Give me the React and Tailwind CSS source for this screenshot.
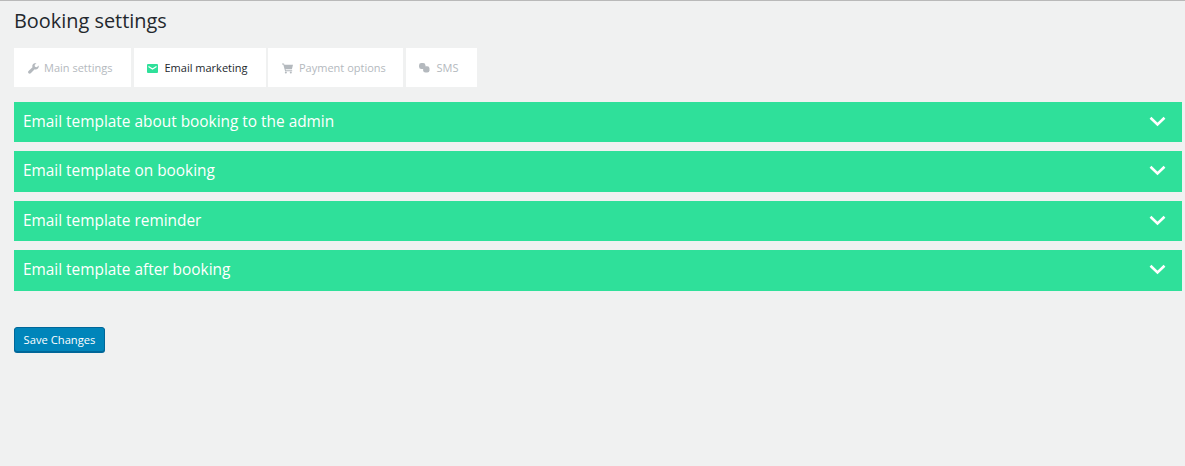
import React from 'react';

const tabs = [
  { name: 'Main settings', width: 'w-[117px]', gap: 'gap-[5px]', icon: 'wrench' },
  { name: 'Email marketing', width: 'w-[132px]', gap: 'gap-[6px]', icon: 'mail', active: true },
  { name: 'Payment options', width: 'w-[135px]', gap: 'gap-[6px]', icon: 'cart' },
  { name: 'SMS', width: 'w-[71px]', gap: 'gap-[6px]', icon: 'chat' },
];

const templates = [
  { title: 'Email template about booking to the admin', height: 'h-[40px] pb-[1px]' },
  { title: 'Email template on booking', height: 'h-[41px] pb-[2px]' },
  { title: 'Email template reminder', height: 'h-[40px] pb-[1px]' },
  { title: 'Email template after booking', height: 'h-[41px] pb-[2px]' },
];

const TabIcon = ({ icon }) => {
  if (icon === 'wrench') {
    return (
      <svg width="11" height="11" viewBox="0 0 12 12" className="text-[#b4b9be]">
        <path fill="currentColor" d="M11.6 2.6 9.6 4.6 7.6 4.2 7.2 2.3 9.3.4C7.8-.2 6 .3 5.2 1.5c-.6.9-.7 2-.3 3L.6 8.8c-.7.7-.7 1.7 0 2.4.7.7 1.7.7 2.4 0l4.3-4.3c1.1.4 2.3.2 3.2-.5 1.1-.9 1.5-2.4 1.1-3.8z" />
      </svg>
    );
  }
  if (icon === 'mail') {
    return (
      <svg width="11" height="9" viewBox="0 0 11 9">
        <rect width="11" height="9" rx="1" fill="#2fe09a" />
        <path d="M1.5 2.5 5.5 5 9.5 2.5" fill="none" stroke="#fff" strokeWidth="1.2" />
      </svg>
    );
  }
  if (icon === 'cart') {
    return (
      <svg width="11" height="11" viewBox="0 0 12 11" className="text-[#b4b9be]">
        <path fill="currentColor" d="M0 0h2.2l.4 1.5H12l-1.2 4.7H3.9l.3 1.2h6.9v1H3.4L1.4 1H0z" />
        <circle cx="4.2" cy="9.8" r="1.1" fill="currentColor" />
        <circle cx="9.6" cy="9.8" r="1.1" fill="currentColor" />
      </svg>
    );
  }
  return (
    <svg width="11" height="10" viewBox="0 0 12 11" className="text-[#b4b9be]">
      <rect x="0" y="0" width="7" height="6.5" rx="2.5" fill="currentColor" />
      <rect x="4.5" y="3.5" width="7" height="7" rx="2.5" fill="currentColor" />
    </svg>
  );
};

const App = () => {
  return (
    <div className="h-[466px] bg-[#f0f1f1] border-t border-[#b9b9b9] pl-[14px] pr-[3px] font-['Open_Sans','Noto_Sans',sans-serif] overflow-hidden">
      <h1 className="pt-[5px] h-[47px] text-[19.9px] leading-[30px] text-[#23282d]">Booking settings</h1>

      <div className="flex gap-[2.5px]">
        {tabs.map((tab) => (
          <div key={tab.name} className={`${tab.width} ${tab.gap} h-[39px] bg-white flex items-center pl-[13px] pt-[1px] text-[11px] ${tab.active ? 'text-[#23282d]' : 'text-[#b4b9be]'}`}>
            <span className="w-[12px] flex justify-center"><TabIcon icon={tab.icon} /></span>
            <span>{tab.name}</span>
          </div>
        ))}
      </div>

      <div className="mt-[15px] flex flex-col gap-[9px]">
        {templates.map((t) => (
          <div key={t.title} className={`${t.height} bg-[#2fe09a] flex items-center justify-between pl-[9px] pr-[16px] text-white text-[15.4px]`}>
            <span>{t.title}</span>
            <svg width="17" height="11" viewBox="0 0 17 11">
              <path d="M1.5 1.8 8.5 8.5 15.5 1.8" fill="none" stroke="#fff" strokeWidth="2.6" />
            </svg>
          </div>
        ))}
      </div>

      <button className="mt-[36px] w-[91px] h-[25px] pt-[1px] bg-[#0085ba] border border-[#006799] rounded-[3px] text-white text-[11.2px] flex items-center justify-center shadow-[0_1px_0_#006799]">
        Save Changes
      </button>
    </div>
  );
};

export default App;
